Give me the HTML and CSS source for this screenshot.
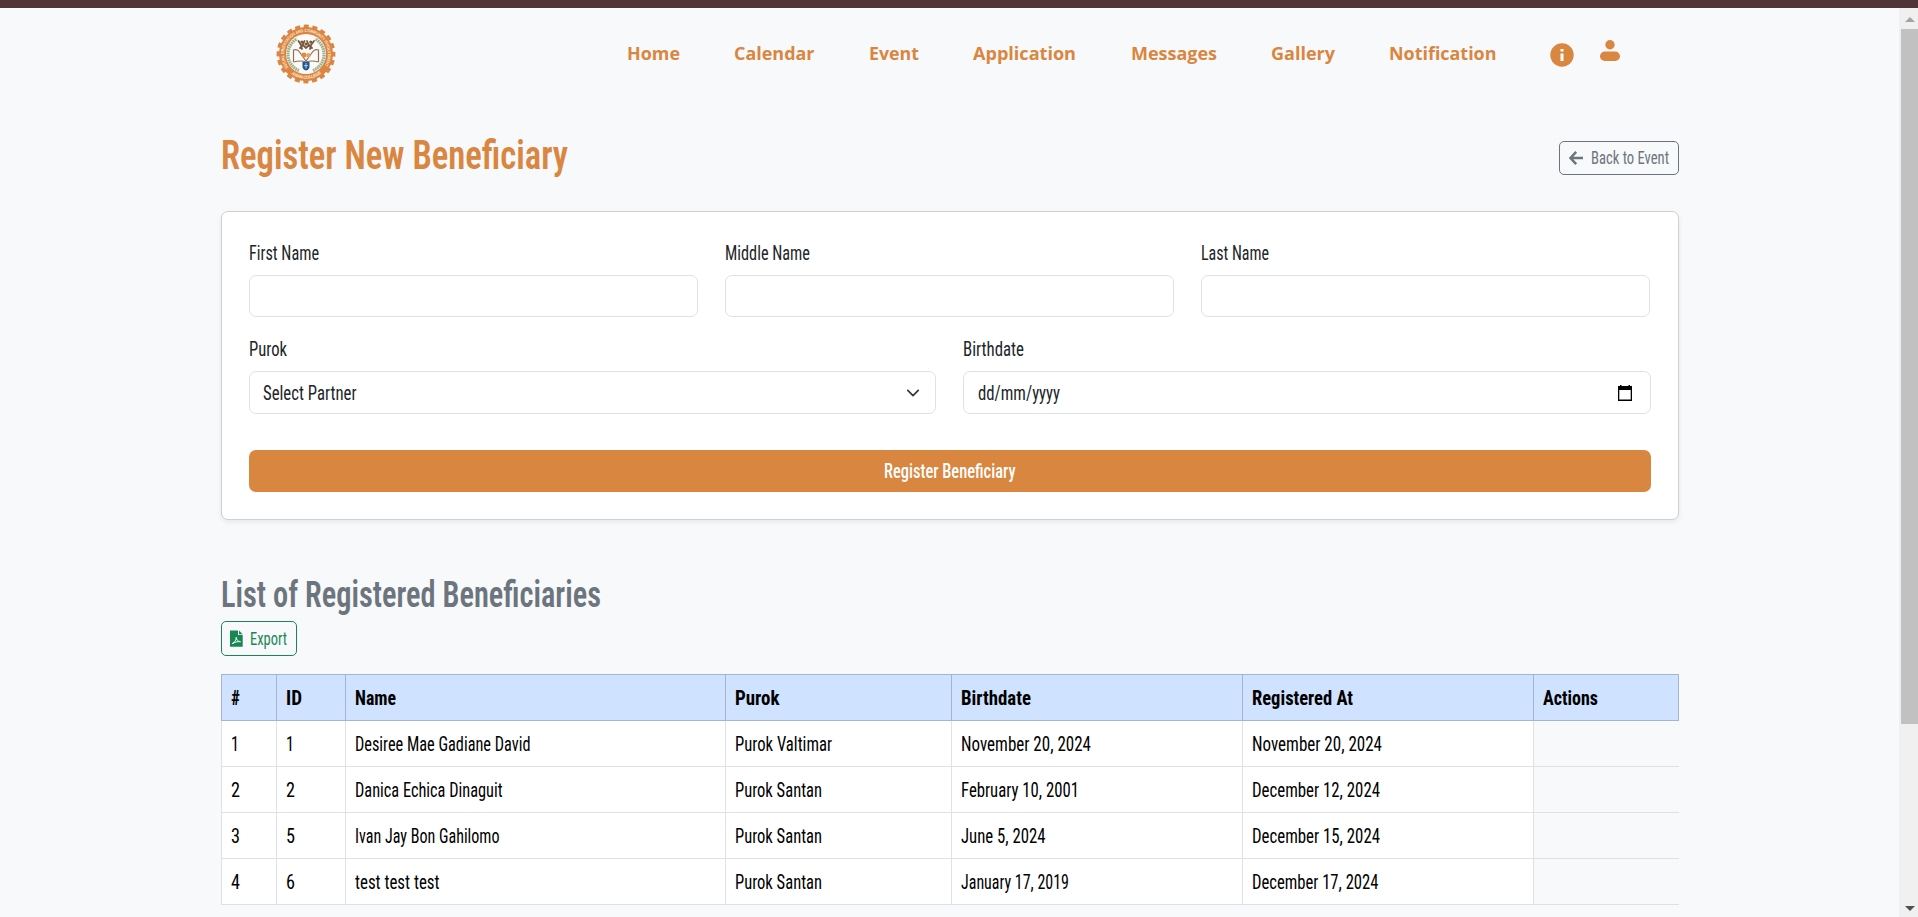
FILE: index.html
```html
<!DOCTYPE html>
<html lang="en">
<head>
<meta charset="utf-8">
<title>Register New Beneficiary</title>
<link rel="stylesheet" href="styles.css">
</head>
<body>
<div class="topbar"></div>
<div class="viewport">
  <div class="page">
    <header class="navbar">
      <svg class="logo" viewBox="-30 -30 60 60" width="60" height="60">
        <circle r="27" fill="#db8540"/>
        <circle r="27.4" fill="none" stroke="#db8540" stroke-width="4" stroke-dasharray="5 3.61" stroke-dashoffset="2.5"/>
        <circle r="20" fill="#fbfaf6"/>
        <path d="M-7 16.500A17.600 17.600 0 0 1 -9 -15.200M7 16.500A17.600 17.600 0 0 0 9 -15.200" fill="none" stroke="#9db08d" stroke-width="3.200" stroke-dasharray="1.700 .6"/>
        <path id="arcTop" d="M-17.400 13.500A22 22 0 1 1 17.400 13.500" fill="none"/>
        <path id="arcBottom" d="M-17 18A24.800 24.800 0 0 0 17 18" fill="none"/>
        <text class="ring"><textPath href="#arcTop" textLength="95" lengthAdjust="spacingAndGlyphs">SOCIAL ORIENTATION AND COMMUNITY INVOLVEMENT</textPath></text>
        <text class="ring ring-b"><textPath href="#arcBottom" startOffset="3" textLength="32">ASIAN COLLEGE</textPath></text>
        <path d="M-7.500 -13l2.500 4 1 4M-1.500 -13l-2 4M1 -13l2 5M8 -13l-3 4-1 4M-6 -6l3-3 3 3 3-3 3 3" fill="none" stroke="#79583f" stroke-width="1.800" stroke-linecap="round"/>
        <g fill="#79583f"><circle cx="-4.200" cy="-12" r="1.500"/><circle cx="4.700" cy="-12" r="1.500"/><circle cy="-10" r="1.500"/></g>
        <path d="M-12.500 8V-4q4 -1.500 6 2l6.500 9M12.500 8V-4q-4 -1.500 -6 2l-6.500 9M-12.500 8q7-2 12.500 0q5.500-2 12.500 0" fill="none" stroke="#8d7058" stroke-width="1.200"/>
        <circle cx="-2" cy="1" r="2.500" fill="#e08a48"/><circle cx="2.400" cy="1.300" r="2.200" fill="#e8a06a"/>
        <path d="M-3.500 8h7v4.500q0 3-3.500 4q-3.500-1-3.500-4z" fill="#1d5795"/>
        <path d="M0 9v5.500M-2 11.700h4" stroke="#dbe7f2" stroke-width=".8"/>
      </svg>
      <nav class="menu">
        <a class="fit" data-w="53">Home</a>
        <a class="fit" data-w="80.5">Calendar</a>
        <a class="fit" data-w="50">Event</a>
        <a class="fit" data-w="103">Application</a>
        <a class="fit" data-w="86">Messages</a>
        <a class="fit" data-w="64">Gallery</a>
        <a class="fit" data-w="107.5">Notification</a>
      </nav>
      <svg class="info" viewBox="0 0 24 24" width="24" height="24"><circle cx="12" cy="12" r="11.700" fill="#d98640"/><path d="M10.500 6h3v2.600h-3zM10.500 10.500h3v7.500h-3z" fill="#fff"/></svg>
      <svg class="user" viewBox="0 0 20 21" width="20" height="21"><circle cx="10" cy="4.700" r="4.700" fill="#d98640"/><rect y="11.500" width="20" height="9.500" rx="4.700" fill="#d98640"/></svg>
    </header>

    <main class="container">
      <div class="heading">
        <h1><span class="fit" data-w="347">Register New Beneficiary</span></h1>
        <button class="btn btn-back">
          <svg viewBox="0 0 14 14" width="14" height="14"><path d="M7.200 .9L1.500 7L7.200 13.100M1.800 7H14" fill="none" stroke="#6c757d" stroke-width="2.500"/></svg>
          <span class="fit" data-w="78">Back to Event</span>
        </button>
      </div>

      <form class="card">
        <div class="row three">
          <div><label><span class="fit" data-w="70">First Name</span></label><div class="control"></div></div>
          <div><label><span class="fit" data-w="85">Middle Name</span></label><div class="control"></div></div>
          <div><label><span class="fit" data-w="68">Last Name</span></label><div class="control"></div></div>
        </div>
        <div class="row two">
          <div><label><span class="fit" data-w="38">Purok</span></label>
            <div class="control tall"><span class="fit" data-w="93.5">Select Partner</span>
              <svg viewBox="0 0 16 16" width="14" height="14"><path d="m2 5 6 6 6-6" fill="none" stroke="#343a40" stroke-width="2" stroke-linecap="round" stroke-linejoin="round"/></svg></div></div>
          <div><label><span class="fit" data-w="61">Birthdate</span></label>
            <div class="control tall date"><span class="fit" data-w="82">dd/mm/yyyy</span>
              <svg viewBox="0 0 14 16" width="14" height="16"><path d="M0 1h2V0h1.500v1h7V0H12v1h2v15H0zM1.300 5v9.600h11.400V5z" fill="#000" fill-rule="evenodd"/></svg></div></div>
        </div>
        <button type="button" class="submit"><span class="fit" data-w="131.5">Register Beneficiary</span></button>
      </form>

      <h2><span class="fit" data-w="380">List of Registered Beneficiaries</span></h2>
      <button class="btn btn-export">
        <svg viewBox="0 0 13 17" width="13" height="17"><path d="M0 .500h8v4.500h4.700v11.700H0z M9 .500l3.700 3.700H9z" fill="#198754"/><path d="M2.300 13.500c2.500-.8 4-3.800 3.900-6.200c.2 2.500 1.800 4.200 4.300 4.400c-2.500-.3-5 .2-8.200 1.800z" fill="none" stroke="#f8f9fa" stroke-width="1"/></svg>
        <span class="fit" data-w="37">Export</span>
      </button>

      <table>
        <colgroup><col class="c1"><col class="c2"><col class="c3"><col class="c4"><col class="c5"><col class="c6"><col class="c7"></colgroup>
        <thead><tr>
          <th><span class="fit" data-w="9">#</span></th><th><span class="fit" data-w="16">ID</span></th><th><span class="fit" data-w="41">Name</span></th><th><span class="fit" data-w="44.5">Purok</span></th><th><span class="fit" data-w="70">Birthdate</span></th><th><span class="fit" data-w="101">Registered At</span></th><th><span class="fit" data-w="55">Actions</span></th>
        </tr></thead>
        <tbody>
          <tr><td><span class="fit" data-w="8">1</span></td><td><span class="fit" data-w="8">1</span></td><td><span class="fit" data-w="175.5">Desiree Mae Gadiane David</span></td><td><span class="fit" data-w="97">Purok Valtimar</span></td><td><span class="fit" data-w="130">November 20, 2024</span></td><td><span class="fit" data-w="130">November 20, 2024</span></td><td></td></tr>
          <tr><td><span class="fit" data-w="9">2</span></td><td><span class="fit" data-w="9">2</span></td><td><span class="fit" data-w="147.5">Danica Echica Dinaguit</span></td><td><span class="fit" data-w="87">Purok Santan</span></td><td><span class="fit" data-w="118">February 10, 2001</span></td><td><span class="fit" data-w="128">December 12, 2024</span></td><td></td></tr>
          <tr><td><span class="fit" data-w="9">3</span></td><td><span class="fit" data-w="9">5</span></td><td><span class="fit" data-w="144.500">Ivan Jay Bon Gahilomo</span></td><td><span class="fit" data-w="87">Purok Santan</span></td><td><span class="fit" data-w="84.5">June 5, 2024</span></td><td><span class="fit" data-w="128">December 15, 2024</span></td><td></td></tr>
          <tr><td><span class="fit" data-w="9">4</span></td><td><span class="fit" data-w="9">6</span></td><td><span class="fit" data-w="84.5">test test test</span></td><td><span class="fit" data-w="87">Purok Santan</span></td><td><span class="fit" data-w="108">January 17, 2019</span></td><td><span class="fit" data-w="126.5">December 17, 2024</span></td><td></td></tr>
        </tbody>
      </table>
    </main>
  </div>

  <div class="scrollbar">
    <svg viewBox="0 0 10 5" width="10" height="5"><path d="M5 0l5 5H0z" fill="#a3a3a3"/></svg>
    <div class="thumb"></div>
    <svg class="down" viewBox="0 0 10 5" width="10" height="5"><path d="M0 0h10L5 5z" fill="#505050"/></svg>
  </div>
</div>
<script src="fit.js"></script>
</body>
</html>
```

FILE: styles.css
```css
* { box-sizing: border-box; }
body { margin: 0; height: 917px; overflow: hidden; background: #f8f9fb; color: #212529; font: 21px/28px Roboto, "Liberation Sans", sans-serif; font-stretch: 75%; }
h1, h2 { margin: 0; }
svg { display: block; flex: none; }
button { font: inherit; color: inherit; font-stretch: inherit; }

.fit { display: inline-block; white-space: nowrap; }
.fit > span { display: inline-block; transform-origin: left center; }

.topbar { height: 8px; background: #503438; }
.viewport { display: flex; height: 909px; }
.page { flex: 1; }

.navbar { display: flex; align-items: flex-start; height: 116px; padding-left: 276px; }
.logo { margin-top: 16px; }
.ring { font: bold 4.2px "Liberation Sans", sans-serif; fill: #fbe8d8; }
.ring-b { font-size: 4.4px; }
.menu { display: flex; gap: 54.3px; margin: 31px 0 0 291px; font: bold 18px/28px "Open Sans", "Noto Sans", sans-serif; color: #d98640; }
.info { margin: 35px 0 0 53px; }
.user { margin: 32px 0 0 26px; }

.container { width: 1458px; margin-left: 221px; }
.heading { display: flex; justify-content: space-between; height: 87px; }
h1 { margin-top: 6px; font-size: 41px; line-height: 50px; font-weight: 600; color: #d98640; }

.btn { display: flex; align-items: center; padding: 0 9px; border: 1px solid; border-radius: 5px; background: none; font-size: 18.3px; line-height: 26px; }
.btn-back { width: 120px; height: 34px; margin-top: 17px; gap: 8px; color: #6c757d; }
.btn-export { width: 76px; height: 35px; padding-left: 8px; gap: 7px; color: #198754; }

.card { height: 309px; padding: 27px; border: 1px solid #cfd0d1; border-radius: 7px; background: #fff; box-shadow: 0 2px 5px rgba(0, 0, 0, .075); }
.row { display: grid; column-gap: 27px; }
.three { grid-template-columns: 449px 449px 449px; height: 96px; }
.two { grid-template-columns: 687px 688px; height: 115px; }
label { display: block; height: 36px; }
.control { display: flex; align-items: center; justify-content: space-between; height: 42px; padding: 0 15px 0 13px; border: 1px solid #dee2e6; border-radius: 7px; }
.tall { height: 43px; }
.date { padding-right: 18px; padding-left: 14px; }
.submit { display: flex; align-items: center; justify-content: center; width: 100%; height: 42px; padding: 0; border: 0; border-radius: 7px; background: #d98640; color: #fff; font-weight: 500; }

h2 { height: 101px; padding-top: 55px; font-size: 36px; line-height: 40px; font-weight: 600; color: #6c757d; }

table { width: 1458px; margin-top: 18px; table-layout: fixed; border-collapse: collapse; color: #000; }
.c1 { width: 55px; } .c2 { width: 69px; } .c3 { width: 380px; } .c4 { width: 226px; } .c5 { width: 291px; } .c6 { width: 291px; }
th, td { height: 46px; padding: 0 0 0 9px; text-align: left; vertical-align: middle; border: 1px solid #dee2e6; background: #fff; }
th { border-color: #a6b5cc; background: #cfe2ff; font-weight: 700; }
td:last-child { border-right: 0; background: transparent; }

.scrollbar { display: flex; flex-direction: column; align-items: center; width: 19px; padding: 9px 0 6px 2px; background: #f0f0f0; }
.thumb { width: 17px; height: 695px; margin-top: 7px; background: #c1c1c1; }
.down { margin-top: auto; }
```

FILE: fit.js
```js
// Condense each label horizontally to its target width.
document.querySelectorAll('.fit').forEach(function (el) {
  var inner = document.createElement('span');
  inner.textContent = el.textContent;
  el.textContent = '';
  el.appendChild(inner);
  var scale = el.dataset.w / inner.getBoundingClientRect().width;
  el.style.width = el.dataset.w + 'px';
  inner.style.transform = 'scaleX(' + scale + ')';
});
```
